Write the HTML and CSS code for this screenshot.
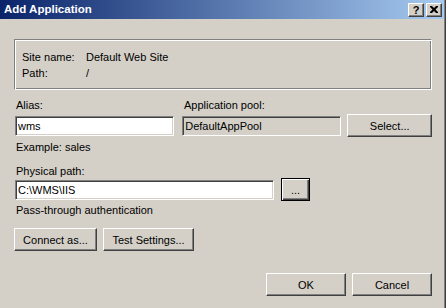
FILE: index.html
```html
<!DOCTYPE html>
<html lang="en">
<head>
  <meta charset="UTF-8">
  <title>Add Application</title>
  <link rel="stylesheet" href="styles.css">
</head>
<body>
  <div class="window">
    <div class="titlebar">
      <span class="title">Add Application</span>
      <span class="cap-btn help">?</span>
      <span class="cap-btn close">
        <svg width="8" height="7" viewBox="0 0 8 7">
          <path d="M0 0h2l2 2 2-2h2v1l-2.5 2.5L8 6v1H6L4 5 2 7H0V6l2.5-2.5L0 1z" fill="#000"/>
        </svg>
      </span>
    </div>

    <div class="content">
      <div class="group">
        <div class="info-row"><span class="info-label">Site name:</span><span>Default Web Site</span></div>
        <div class="info-row"><span class="info-label">Path:</span><span>/</span></div>
      </div>

      <div class="row labels-row">
        <label class="label col-alias">Alias:</label>
        <label class="label col-pool">Application pool:</label>
      </div>
      <div class="row controls-row">
        <input class="field col-alias" type="text" value="wms">
        <div class="field readonly col-pool">DefaultAppPool</div>
        <button class="btn select-btn">Select...</button>
      </div>
      <div class="label hint">Example: sales</div>

      <div class="label path-label">Physical path:</div>
      <div class="row path-row">
        <input class="field path-field" type="text" value="C:\WMS\IIS">
        <button class="btn default browse-btn">...</button>
      </div>
      <div class="label auth">Pass-through authentication</div>

      <div class="row auth-buttons">
        <button class="btn connect-btn">Connect as...</button>
        <button class="btn test-btn">Test Settings...</button>
      </div>

      <div class="row dialog-buttons">
        <button class="btn ok-btn">OK</button>
        <button class="btn cancel-btn">Cancel</button>
      </div>
    </div>
  </div>
</body>
</html>
```

FILE: styles.css
```css
body {
  margin: 0;
  font-family: "Liberation Sans", Arial, sans-serif;
  font-size: 11px;
  color: #000;
  background: #d4d0c8;
}

.window {
  width: 446px;
  height: 308px;
  box-sizing: border-box;
  background: #d4d0c8;
  box-shadow: inset -1px 0 #404040, inset -2px 0 #808080;
  overflow: hidden;
}

.titlebar {
  height: 19px;
  margin-right: 2px;
  padding: 0 2px 0 4px;
  display: flex;
  align-items: center;
  background: linear-gradient(to right, #0a246a, #a6caf0);
}

.title {
  flex: 1;
  color: #fff;
  font-weight: bold;
  font-size: 11.5px;
  line-height: 19px;
}

.cap-btn {
  width: 16px;
  height: 14px;
  box-sizing: border-box;
  display: flex;
  align-items: center;
  justify-content: center;
  background: #d4d0c8;
  border: 1px solid;
  border-color: #fff #404040 #404040 #fff;
  box-shadow: inset -1px -1px #808080;
  font-weight: bold;
  font-size: 11px;
  line-height: 12px;
}

.help {
  margin-right: 2px;
}

/* common controls */
.field {
  height: 20px;
  box-sizing: border-box;
  margin: 0;
  padding: 0 2px;
  border: 1px solid;
  border-color: #808080 #fff #fff #808080;
  box-shadow: inset 1px 1px #404040, inset -1px -1px #d4d0c8;
  background: #fff;
  font-family: inherit;
  font-size: 11px;
  color: #000;
  outline: none;
}

.readonly {
  background: #d4d0c8;
  line-height: 18px;
}

.btn {
  height: 23px;
  box-sizing: border-box;
  margin: 0;
  padding: 0;
  background: #d4d0c8;
  border: 1px solid;
  border-color: #fff #404040 #404040 #fff;
  box-shadow: inset -1px -1px #808080;
  font-family: inherit;
  font-size: 11px;
  color: #000;
}

.btn.default {
  border: 1px solid #000;
  box-shadow: inset 1px 1px #fff, inset -1px -1px #404040, inset -2px -2px #808080;
}

.content {
  padding: 20px 14px 0 15px;
}

/* etched group box */
.group {
  margin-left: -1px;
  width: 418px;
  height: 51px;
  box-sizing: border-box;
  padding: 10px 0 0 7px;
  border: 1px solid;
  border-color: #808080 #fff #fff #808080;
  box-shadow: inset 1px 1px #fff, inset -1px -1px #808080;
}

.info-row {
  display: flex;
  line-height: 15px;
  margin-bottom: 1px;
}

.info-label {
  width: 64px;
}

.row {
  display: flex;
}

.label {
  display: block;
  line-height: 15px;
  padding-left: 1px;
}

.labels-row {
  margin-top: 8px;
}

.col-alias {
  width: 160px;
  box-sizing: border-box;
}

.col-pool {
  width: 160px;
  box-sizing: border-box;
  margin-left: 8px;
}

.controls-row {
  margin-top: 1px;
  align-items: center;
}

.select-btn {
  width: 85px;
  margin-left: 6px;
}

.hint {
  margin-top: 3px;
}

.path-label {
  margin-top: 9px;
}

.path-row {
  align-items: center;
}

.path-field {
  width: 259px;
}

.browse-btn {
  width: 29px;
  margin: -1px 0 -1px 7px;
}

.auth {
  margin-top: 3px;
}

.auth-buttons {
  margin-top: 10px;
  margin-left: -1px;
  gap: 6px;
}

.connect-btn {
  width: 83px;
}

.test-btn {
  width: 91px;
}

.dialog-buttons {
  margin-top: 22px;
  justify-content: flex-end;
  gap: 6px;
}

.ok-btn,
.cancel-btn {
  width: 80px;
}
```
